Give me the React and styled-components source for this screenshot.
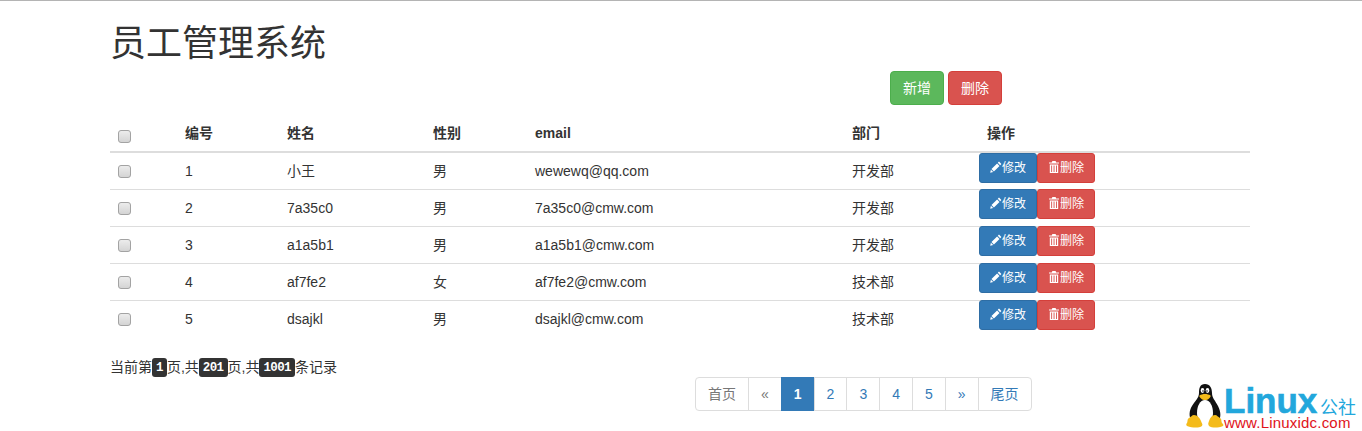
import React from "react";
import styled, { createGlobalStyle } from "styled-components";

const sans = `"Liberation Sans", "Noto Sans CJK SC", sans-serif`;

const GlobalStyle = createGlobalStyle`
  html, body {
    margin: 0;
    padding: 0;
    background: #fff;
  }
  body {
    font-family: ${sans};
    font-size: 14px;
    line-height: 20px;
    color: #333;
    overflow: hidden;
  }
  * {
    box-sizing: border-box;
  }
`;

const Page = styled.div`
  position: relative;
  height: 431px;
  border-top: 1px solid #b4b4b4;
  overflow: hidden;
`;

const Container = styled.div`
  width: 1170px;
  margin-left: 95px;
  padding: 0 15px;
`;

const Title = styled.h1`
  margin: 23px 0 7px;
  font-size: 36px;
  font-weight: 400;
  line-height: 39.6px;
`;

const Toolbar = styled.div`
  display: flex;
  gap: 4px;
  padding-left: 780px;
  margin-bottom: 10px;
`;

const Btn = styled.button`
  display: inline-flex;
  align-items: center;
  justify-content: center;
  height: ${(p) => (p.$small ? "30px" : "34px")};
  padding: ${(p) => (p.$small ? "0 10px 2px" : "0 12px 2px")};
  font-family: ${sans};
  font-size: ${(p) => (p.$small ? "12px" : "14px")};
  color: #fff;
  background: ${(p) => p.$bg};
  border: 1px solid ${(p) => p.$line};
  border-radius: ${(p) => (p.$small ? "3px" : "4px")};
`;

const Table = styled.table`
  width: 1140px;
  table-layout: fixed;
  border-collapse: collapse;
  border-spacing: 0;
  margin-bottom: 20px;
`;

const Th = styled.th`
  padding: 8px;
  height: 36px;
  line-height: 20px;
  text-align: left;
  font-weight: 700;
  vertical-align: bottom;
  border-bottom: 2px solid #ddd;
`;

const Td = styled.td`
  padding: 8px;
  height: 37px;
  line-height: 20px;
  vertical-align: top;
  border-top: 1px solid #ddd;
  tr:first-child > & {
    border-top: 0;
    height: 36px;
  }
`;

const ActionTd = styled(Td)`
  padding: 0;
`;

const Actions = styled.div`
  display: flex;
  tr:not(:first-child) & {
    margin-top: -1px;
  }
`;

const Check = styled.input.attrs({ type: "checkbox" })`
  appearance: none;
  display: block;
  width: 13px;
  height: 13px;
  margin: ${(p) => (p.$head ? "7px 0 0" : "4px 0 0")};
  background: linear-gradient(#ececec, #d4d4d4);
  border: 1px solid #a3a3a3;
  border-radius: 3px;
`;

const Footer = styled.div`
  display: grid;
  grid-template-columns: 585px 1fr;
`;

const Info = styled.div`
  height: 20px;
  white-space: nowrap;
`;

const Kbd = styled.kbd`
  display: inline-block;
  height: 19px;
  padding: 0 4px;
  font-family: "Liberation Mono", monospace;
  font-size: 12.5px;
  font-weight: 700;
  line-height: 20px;
  letter-spacing: -0.6px;
  vertical-align: top;
  margin-top: 1px;
  color: #fff;
  background: #333;
  border-radius: 3px;
`;

const Pager = styled.ul`
  display: inline-flex;
  margin: 20px 0 0;
  padding: 0;
  list-style: none;
`;

const PageItem = styled.li`
  height: 34px;
  padding: 6px 12px;
  margin-left: -1px;
  line-height: 20px;
  color: ${(p) => (p.$active ? "#fff" : p.$muted ? "#777" : "#337ab7")};
  font-weight: ${(p) => (p.$active ? 700 : 400)};
  background: ${(p) => (p.$active ? "#337ab7" : "#fff")};
  border: 1px solid ${(p) => (p.$active ? "#337ab7" : "#ddd")};
  &:first-child {
    margin-left: 0;
    border-radius: 4px 0 0 4px;
  }
  &:last-child {
    border-radius: 0 4px 4px 0;
  }
`;

const Logo = styled.div`
  position: absolute;
  left: 1186px;
  top: 380px;
  width: 176px;
  height: 50px;
`;

const Penguin = styled.svg`
  position: absolute;
  left: 0;
  top: 2px;
`;

const LogoName = styled.span`
  position: absolute;
  left: 38px;
  top: 7px;
  font-family: "Liberation Sans", sans-serif;
  font-weight: 700;
  font-size: 35px;
  line-height: 26px;
  color: #22a7dc;
  -webkit-text-stroke: 0.6px #22a7dc;
`;

const LogoCn = styled.span`
  position: absolute;
  left: 134px;
  top: 16px;
  font-family: "Noto Sans CJK SC", sans-serif;
  font-size: 18px;
  line-height: 18px;
  color: #22a7dc;
`;

const LogoUrl = styled.span`
  position: absolute;
  left: 38px;
  top: 35px;
  font-family: "Liberation Sans", sans-serif;
  font-size: 15px;
  line-height: 13px;
  letter-spacing: 0.2px;
  color: #e0121a;
`;

const IconBox = styled.svg`
  display: block;
  flex: none;
`;

const PencilIcon = () => (
  <IconBox width="12" height="12" viewBox="0 0 12 12" fill="#fff">
    <path d="M9 .6 11.4 3l-1.2 1.2L7.8 1.8zM7.1 2.5l2.4 2.4-5.6 5.6-2.4-2.4zM.9 8.8 3.2 11l-3 .8z" />
  </IconBox>
);

const TrashIcon = () => (
  <IconBox width="12" height="12" viewBox="0 0 12 12" fill="#fff">
    <path
      fillRule="evenodd"
      d="M4.4 0h3.2l.6 1.4H11v1.2H1V1.4h2.8zM1.8 3.4h8.4V12H1.8zM3.2 4.4v6.6h.9V4.4zm2.4 0v6.6h.9V4.4zm2.4 0v6.6h.9V4.4z"
    />
  </IconBox>
);

const PenguinLogo = () => (
  <Penguin width="38" height="46" viewBox="0 0 38 46">
    {/* body and wings */}
    <path d="M19 1c5 0 7 4 7 9 0 5 3 7 6 13 3 6 3 11 1 14H5C3 33 3 28 6 23c3-5 7-8 7-13 0-5 1-9 6-9z" fill="#111" />
    {/* belly */}
    <path d="M19 17c5 0 8 6 8 13 0 6-3 10-8 10s-8-4-8-10c0-7 3-13 8-13z" fill="#fff" />
    {/* eyes */}
    <ellipse cx="16.5" cy="7.5" rx="1.8" ry="2.4" fill="#fff" />
    <ellipse cx="21.5" cy="7.5" rx="1.8" ry="2.4" fill="#fff" />
    <circle cx="17" cy="8" r="0.8" fill="#111" />
    <circle cx="21" cy="8" r="0.8" fill="#111" />
    {/* beak */}
    <path d="M13.5 12.5c3-2 8-2 11 0 .5 1-.5 2-1.500 3-2 2-6 2-8 0-1-1-2-2-1.500-3z" fill="#f4bb1a" />
    {/* feet */}
    <path d="M8 32c3 0 6 3 7 6s2 3 1 5c-3 2-9 2-15 0-1-1-1-2 0-3 1-2 0-4 2-5 2-1 3-3 5-3z" fill="#f4bb1a" />
    <path d="M29 32c-3 0-5 3-6 6s-1 3 0 5c3 2 9 2 14 0 1-1 0-2-1-3-1-2 0-4-2-5s-3-3-5-3z" fill="#f4bb1a" />
  </Penguin>
);

const employees = [
  { id: 1, name: "小王", gender: "男", email: "wewewq@qq.com", dept: "开发部" },
  { id: 2, name: "7a35c0", gender: "男", email: "7a35c0@cmw.com", dept: "开发部" },
  { id: 3, name: "a1a5b1", gender: "男", email: "a1a5b1@cmw.com", dept: "开发部" },
  { id: 4, name: "af7fe2", gender: "女", email: "af7fe2@cmw.com", dept: "技术部" },
  { id: 5, name: "dsajkl", gender: "男", email: "dsajkl@cmw.com", dept: "技术部" },
];

const green = { $bg: "#5cb85c", $line: "#4cae4c" };
const red = { $bg: "#d9534f", $line: "#d43f3a" };
const blue = { $bg: "#337ab7", $line: "#2e6da4" };

export default function App() {
  return (
    <Page>
      <GlobalStyle />
      <Container>
        <Title>员工管理系统</Title>
        <Toolbar>
          <Btn {...green}>新增</Btn>
          <Btn {...red}>删除</Btn>
        </Toolbar>
        <Table>
          <colgroup>
            <col width="67" />
            <col width="102" />
            <col width="146" />
            <col width="102" />
            <col width="317" />
            <col width="135" />
            <col width="271" />
          </colgroup>
          <thead>
            <tr>
              <Th>
                <Check $head />
              </Th>
              <Th>编号</Th>
              <Th>姓名</Th>
              <Th>性别</Th>
              <Th>email</Th>
              <Th>部门</Th>
              <Th>操作</Th>
            </tr>
          </thead>
          <tbody>
            {employees.map((emp) => (
              <tr key={emp.id}>
                <Td>
                  <Check />
                </Td>
                <Td>{emp.id}</Td>
                <Td>{emp.name}</Td>
                <Td>{emp.gender}</Td>
                <Td>{emp.email}</Td>
                <Td>{emp.dept}</Td>
                <ActionTd>
                  <Actions>
                    <Btn $small {...blue}>
                      <PencilIcon />
                      修改
                    </Btn>
                    <Btn $small {...red}>
                      <TrashIcon />
                      删除
                    </Btn>
                  </Actions>
                </ActionTd>
              </tr>
            ))}
          </tbody>
        </Table>
        <Footer>
          <Info>
            当前第<Kbd>1</Kbd>页,共<Kbd>201</Kbd>页,共<Kbd>1001</Kbd>条记录
          </Info>
          <div>
            <Pager>
              <PageItem $muted>首页</PageItem>
              <PageItem $muted>«</PageItem>
              <PageItem $active>1</PageItem>
              <PageItem>2</PageItem>
              <PageItem>3</PageItem>
              <PageItem>4</PageItem>
              <PageItem>5</PageItem>
              <PageItem>»</PageItem>
              <PageItem>尾页</PageItem>
            </Pager>
          </div>
        </Footer>
      </Container>
      <Logo>
        <PenguinLogo />
        <LogoName>Linux</LogoName>
        <LogoCn>公社</LogoCn>
        <LogoUrl>www.Linuxidc.com</LogoUrl>
      </Logo>
    </Page>
  );
}
